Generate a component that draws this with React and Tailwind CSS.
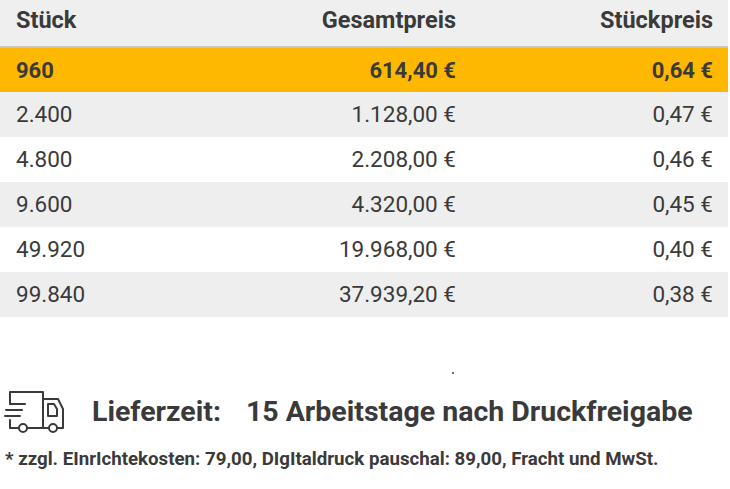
const rows = [
  { qty: '2.400', total: '1.128,00 €', unit: '0,47 €' },
  { qty: '4.800', total: '2.208,00 €', unit: '0,46 €' },
  { qty: '9.600', total: '4.320,00 €', unit: '0,45 €' },
  { qty: '49.920', total: '19.968,00 €', unit: '0,40 €' },
  { qty: '99.840', total: '37.939,20 €', unit: '0,38 €' },
];

const font = { fontFamily: 'Roboto, "Liberation Sans", sans-serif' };

const TruckIcon = () => (
  <svg width="70" height="50" viewBox="0 0 70 50" fill="none" stroke="#3a3a3a" strokeWidth="2" strokeLinecap="round" strokeLinejoin="round">
    <path d="M10 17V5H43V41" />
    <path d="M10 17H25M6 23H22M5 29H20" />
    <path d="M10 33V41H19" />
    <circle cx="23" cy="41" r="4" />
    <path d="M27 41H49" />
    <circle cx="53" cy="41" r="4" />
    <path d="M57 41H63V22L58 12H43" />
    <path d="M48 17V29H57V22L54 17Z" />
  </svg>
);

const Row = ({ qty, total, unit, className }) => (
  <div className={`grid grid-cols-[240px_232px_1fr] items-center h-[45px] text-[22.5px] ${className}`}>
    <div className="pl-4">{qty}</div>
    <div className="pr-4 text-right">{total}</div>
    <div className="pr-[15px] text-right">{unit}</div>
  </div>
);

export default function App() {
  return (
    <div className="w-[730px] h-[489px] bg-white text-[#3a3a3a] overflow-hidden" style={font}>
      <div className="w-[728px]">
        <div className="grid grid-cols-[240px_232px_1fr] items-start h-[48px] pt-[3px] bg-[#efefef] border-b-2 border-[#c4c4c4] text-[23.5px] font-bold">
          <div className="pl-4">Stück</div>
          <div className="pr-4 text-right">Gesamtpreis</div>
          <div className="pr-[15px] text-right">Stückpreis</div>
        </div>
        <div className="grid grid-cols-[240px_232px_1fr] items-center h-[44px] bg-[#ffb800] text-[22px] font-bold">
          <div className="pl-4">960</div>
          <div className="pr-4 text-right">614,40 €</div>
          <div className="pr-[15px] text-right">0,64 €</div>
        </div>
        {rows.map((r, i) => (
          <Row key={r.qty} {...r} className={i % 2 === 0 ? 'bg-[#eeeeee]' : 'bg-white'} />
        ))}
      </div>

      <div className="relative h-[70px]">
        <span className="absolute left-[452px] top-[55px] w-[2px] h-[2px] rounded-full bg-[#3a3a3a]" />
      </div>

      <div className="flex items-center h-[50px] whitespace-nowrap">
        <TruckIcon />
        <span className="ml-[22px] text-[28.5px] font-bold">Lieferzeit:</span>
        <span className="ml-[25px] text-[28.5px] font-bold">15 Arbeitstage nach Druckfreigabe</span>
      </div>
      <div className="pl-[5px] mt-[10px] text-[18.7px] leading-[24px] font-bold whitespace-nowrap">
        * zzgl. EInrIchtekosten: 79,00, DIgItaldruck pauschal: 89,00, Fracht und MwSt.
      </div>
    </div>
  );
}
